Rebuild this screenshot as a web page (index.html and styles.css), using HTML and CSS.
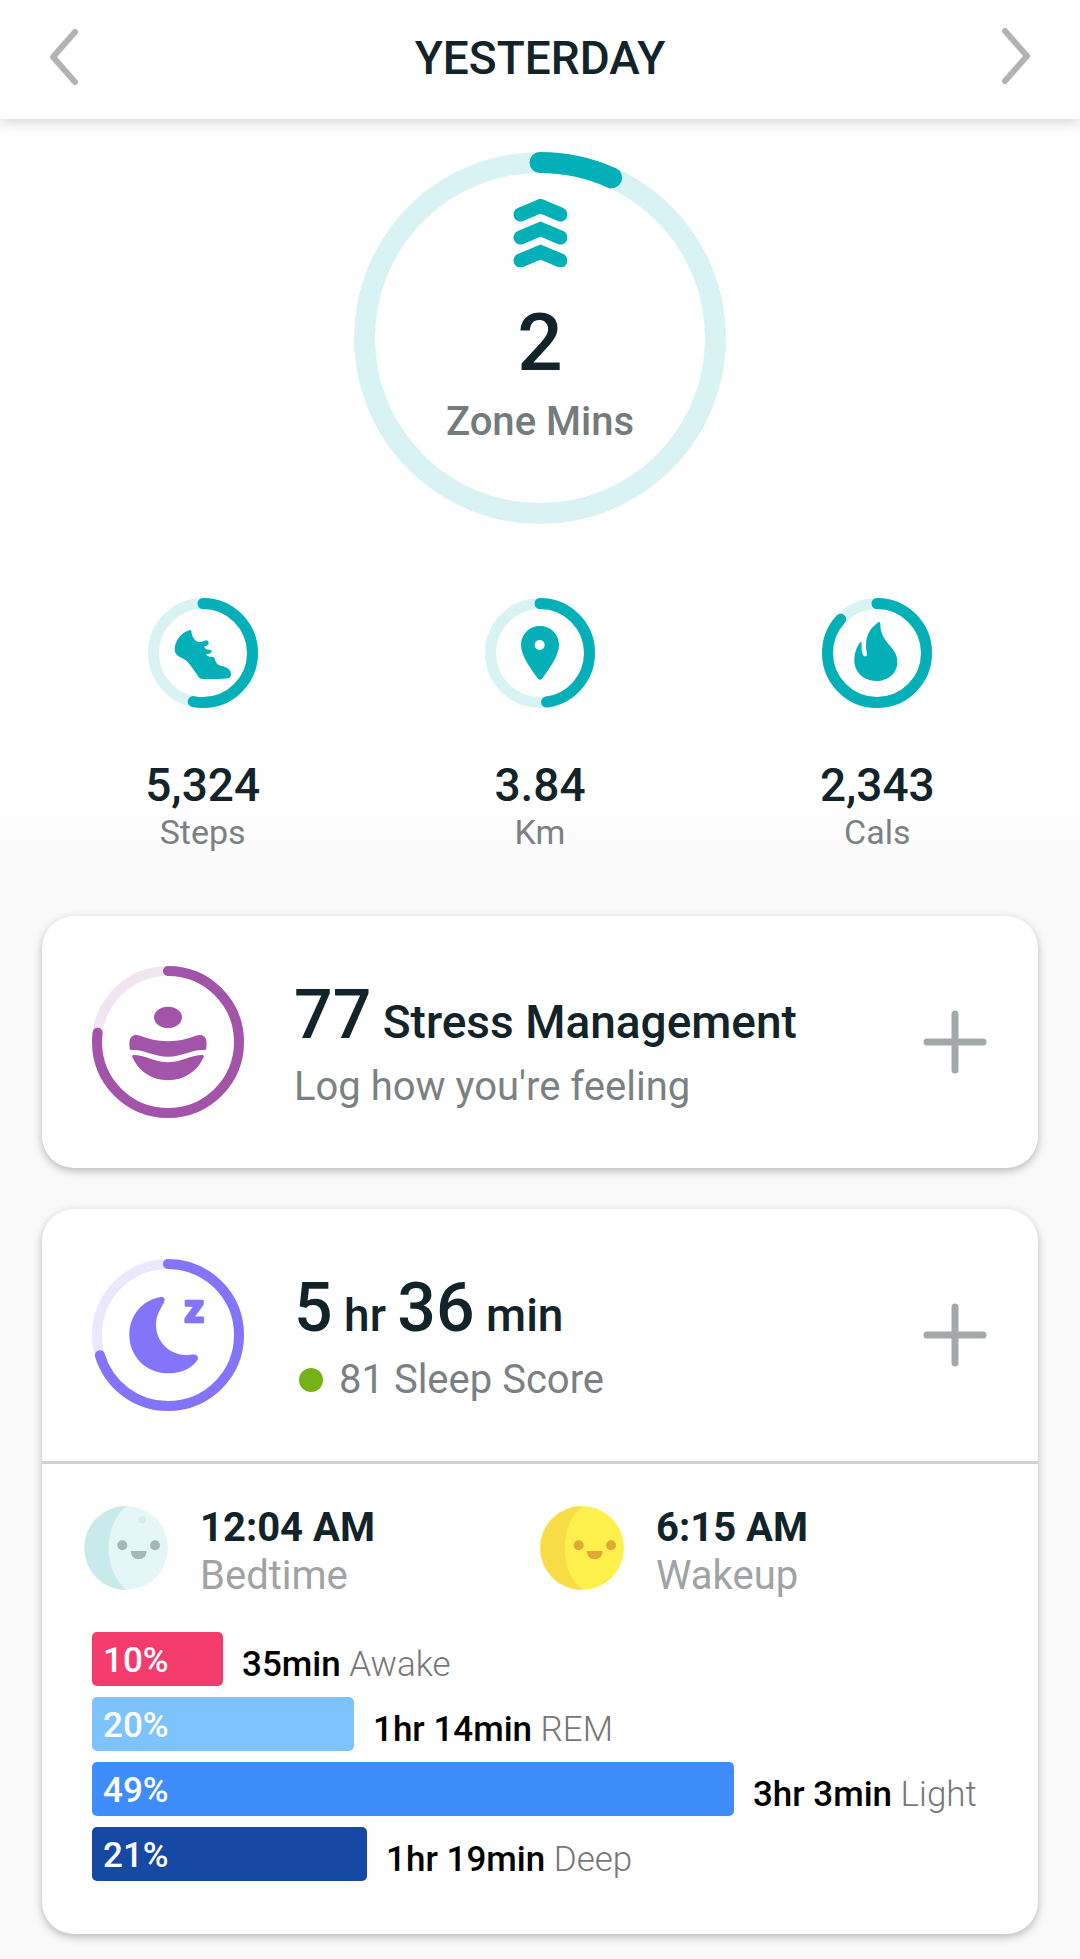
FILE: index.html
```
<!DOCTYPE html>
<html lang="en">
<head>
  <meta charset="utf-8">
  <meta name="viewport" content="width=device-width, initial-scale=1">
  <title>Daily Activity</title>
  <link rel="stylesheet" href="styles.css">
</head>
<body>
  <header class="top-bar">
    <button type="button" class="nav-btn" aria-label="Previous day">
      <svg width="32" height="60" viewBox="0 0 32 60"><path d="M27 5L5 30L27 55"/></svg>
    </button>
    <h1>YESTERDAY</h1>
    <button type="button" class="nav-btn" aria-label="Next day">
      <svg width="32" height="60" viewBox="0 0 32 60"><path d="M5 4L27 29L5 54"/></svg>
    </button>
  </header>

  <main>
    <section class="zone">
      <svg class="zone-ring" viewBox="0 0 372 372">
        <circle class="track" cx="186" cy="186" r="175.5"/>
        <circle class="progress" cx="186" cy="186" r="175.5" pathLength="100" stroke-dasharray="6.7 100" transform="rotate(-90 186 186)"/>
      </svg>
      <div class="zone-info">
        <svg class="zone-icon" width="54" height="68" viewBox="0 0 54 68">
          <path d="M7.5 15.5L27.5 7L47.5 15.5M7.5 38.5L27.5 30L47.5 38.5M7.5 61.5L27.5 53L47.5 61.5"/>
        </svg>
        <div class="zone-value">2</div>
        <div class="zone-label">Zone Mins</div>
      </div>
    </section>

    <section class="stats">
      <div class="stat">
        <svg class="stat-ring" viewBox="0 0 330 330">
          <circle class="track" cx="165" cy="165" r="148.5"/>
          <circle class="progress" cx="165" cy="165" r="148.5" pathLength="100" stroke-dasharray="53.1 100" transform="rotate(-90 165 165)"/>
          <path class="shape" d="M80 152C83 124 101 104 124 97Q129 94 130 100C131 114 139 130 153 132C162 133 167 128 174 127Q182 127 182 136C182 142 175 144 169 145Q170 156 185 155Q192 156 191 161C189 166 181 167 174 169Q177 178 191 176Q201 177 202 187C204 198 212 202 222 204C238 208 248 214 249 228Q249 239 240 241C226 244 190 243 162 243Q156 243 152 237C142 222 128 202 116 189C106 180 94 178 86 170Q79 163 80 152Z"/>
        </svg>
        <div class="stat-value">5,324</div>
        <div class="stat-label">Steps</div>
      </div>
      <div class="stat">
        <svg class="stat-ring" viewBox="0 0 330 330">
          <circle class="track" cx="165" cy="165" r="148.5"/>
          <circle class="progress" cx="165" cy="165" r="148.5" pathLength="100" stroke-dasharray="47.8 100" transform="rotate(-90 165 165)"/>
          <path class="shape" d="M165 84C197 84 222 108 222 141C222 174 192 213 172 241Q165 250 158 241C138 213 108 174 108 141C108 108 133 84 165 84Z"/>
          <circle cx="164" cy="141" r="15" fill="#fff"/>
        </svg>
        <div class="stat-value">3.84</div>
        <div class="stat-label">Km</div>
      </div>
      <div class="stat">
        <svg class="stat-ring" viewBox="0 0 330 330">
          <circle class="track" cx="165" cy="165" r="148.5"/>
          <circle class="progress" cx="165" cy="165" r="148.5" pathLength="100" stroke-dasharray="86.8 100" transform="rotate(-90 165 165)"/>
          <path class="shape" d="M169 73Q175 70 175 78C174 96 182 116 196 134C212 153 226 166 226 192C226 226 198 249 163 249C124 249 97 222 97 187C97 166 104 146 115 133Q119 130 119 136C118 152 120 163 123 171Q126 176 131 175Q136 173 135 167C130 144 131 119 142 101C150 88 160 80 169 73Z"/>
        </svg>
        <div class="stat-value">2,343</div>
        <div class="stat-label">Cals</div>
      </div>
    </section>

    <section class="card">
      <div class="card-head">
        <svg class="card-ring stress" viewBox="0 0 456 456">
          <circle class="track" cx="228" cy="228" r="213"/>
          <circle class="progress" cx="228" cy="228" r="213" pathLength="100" stroke-dasharray="77 100" transform="rotate(-90 228 228)"/>
          <ellipse class="shape" cx="228" cy="154" rx="42" ry="32"/>
          <path class="shape" d="M117 252Q113 252 113 247C112 232 111 221 118 213Q125 204 139 208C166 217 194 226 228 226C262 226 290 217 317 208Q331 204 338 213C345 221 344 232 343 247Q343 252 339 252C300 249 270 272 228 272C186 272 156 249 117 252Z"/>
          <path class="shape" d="M125 267C160 267 190 289 228 289C266 289 296 267 331 267Q338 268 335 274C316 317 276 343 228 343C180 343 140 317 121 274Q118 268 125 267Z"/>
        </svg>
        <div class="card-text">
          <h2><span class="big">77</span> Stress Management</h2>
          <p>Log how you're feeling</p>
        </div>
        <button type="button" class="add-btn" aria-label="Log stress">
          <svg width="64" height="64" viewBox="0 0 64 64"><path d="M32 4V60M4 32H60"/></svg>
        </button>
      </div>
    </section>

    <section class="card">
      <div class="card-head">
        <svg class="card-ring sleep" viewBox="0 0 456 456">
          <circle class="track" cx="228" cy="228" r="213"/>
          <circle class="progress" cx="228" cy="228" r="213" pathLength="100" stroke-dasharray="70.3 100" transform="rotate(-90 228 228)"/>
          <path class="shape" d="M203 115C216 112 221 119 216 130C207 149 192 166 192 198C192 246 230 286 280 288C292 289 301 285 310 287Q321 290 317 302C298 330 266 343 228 343C162 343 112 292 112 228C112 170 150 124 203 115Z"/>
          <text class="zed" x="277" y="188">z</text>
        </svg>
        <div class="card-text">
          <h2><span class="big">5</span> hr <span class="big">36</span> min</h2>
          <p class="score"><span class="dot"></span>81 Sleep Score</p>
        </div>
        <button type="button" class="add-btn" aria-label="Log sleep">
          <svg width="64" height="64" viewBox="0 0 64 64"><path d="M32 4V60M4 32H60"/></svg>
        </button>
      </div>

      <div class="sleep-detail">
        <div class="times">
          <div class="time">
            <svg class="face" viewBox="0 0 252 252">
              <circle cx="126" cy="126" r="126" fill="#e5f6f6"/>
              <path d="M127 0A126 126 0 0 0 127 252Q74 205 74 126Q74 47 127 0Z" fill="#c8eaeb"/>
              <circle cx="175" cy="41" r="11" fill="#d2ebeb"/>
              <g fill="#a3b8b8">
                <circle cx="115" cy="118" r="15"/>
                <circle cx="213" cy="118" r="15"/>
                <path d="M140 135H188Q186 160 164 160Q142 160 140 135Z"/>
              </g>
            </svg>
            <div class="time-text">
              <strong>12:04 AM</strong>
              <span>Bedtime</span>
            </div>
          </div>
          <div class="time">
            <svg class="face" viewBox="0 0 252 252">
              <circle cx="126" cy="126" r="126" fill="#fef04c"/>
              <path d="M127 0A126 126 0 0 0 127 252Q74 205 74 126Q74 47 127 0Z" fill="#f8dd49"/>
              <g fill="#e0a834">
                <circle cx="116" cy="118" r="15"/>
                <circle cx="213" cy="118" r="15"/>
                <path d="M140 135H188Q186 160 164 160Q142 160 140 135Z"/>
              </g>
            </svg>
            <div class="time-text">
              <strong>6:15 AM</strong>
              <span>Wakeup</span>
            </div>
          </div>
        </div>

        <ul class="stages">
          <li>
            <span class="bar awake" style="--share: 10">10%</span>
            <span class="stage-label"><b>35min</b> Awake</span>
          </li>
          <li>
            <span class="bar rem" style="--share: 20">20%</span>
            <span class="stage-label"><b>1hr 14min</b> REM</span>
          </li>
          <li>
            <span class="bar light" style="--share: 49">49%</span>
            <span class="stage-label"><b>3hr 3min</b> Light</span>
          </li>
          <li>
            <span class="bar deep" style="--share: 21">21%</span>
            <span class="stage-label"><b>1hr 19min</b> Deep</span>
          </li>
        </ul>
      </div>
    </section>
  </main>
</body>
</html>
```
FILE: styles.css
```
* {
  box-sizing: border-box;
}
body {
  margin: 0;
  background: linear-gradient(#fff 800px, #f9f9f9 880px);
  font-family: Roboto, "Liberation Sans", sans-serif;
  color: #12232a;
}
h1, h2, p, ul {
  margin: 0;
  padding: 0;
}
svg {
  display: block;
  fill: none;
  stroke-linecap: round;
}
button {
  padding: 0;
  border: none;
  background: none;
  cursor: pointer;
}

/* top bar */
.top-bar {
  display: flex;
  align-items: center;
  justify-content: space-between;
  padding: 27px 48px 32px;
  background: #fff;
  box-shadow: 0 2px 14px rgba(0, 0, 0, 0.2);
}
.top-bar h1 {
  padding-top: 2px;
  font-size: 46px;
  line-height: 54px;
  font-weight: 500;
}
.nav-btn svg {
  stroke: #b3b3b3;
  stroke-width: 6;
  stroke-linejoin: round;
}

/* rings */
.track {
  stroke: #d9f2f3;
}
.progress {
  stroke: #04b0b8;
}
.shape {
  fill: #04b0b8;
}

.zone {
  display: grid;
  justify-content: center;
  padding-top: 33px;
}
.zone-ring, .zone-info {
  grid-area: 1 / 1;
}
.zone-ring {
  width: 372px;
  stroke-width: 21;
}
.zone-info {
  display: flex;
  flex-direction: column;
  align-items: center;
  padding-top: 47px;
}
.zone-icon {
  stroke: #04b0b8;
  stroke-width: 14;
}
.zone-value {
  margin: 36px 0 15px;
  font-size: 80px;
  line-height: 80px;
  font-weight: 500;
}
.zone-label {
  font-size: 40px;
  line-height: 48px;
  font-weight: 500;
  color: #737b7d;
}

.stats {
  display: grid;
  grid-template-columns: repeat(3, 1fr);
  padding: 74px 34px 64px;
  text-align: center;
}
.stat-ring {
  width: 110px;
  margin: 0 auto 50px;
  stroke-width: 33;
}
.stat-ring .shape, .card-ring .shape {
  stroke: none;
}
.stat-ring circle[fill] {
  stroke: none;
}
.stat-value {
  font-size: 46px;
  line-height: 54px;
  font-weight: 500;
}
.stat-label {
  font-size: 34px;
  line-height: 40px;
  color: #7b8183;
}

/* cards */
.card {
  margin: 0 42px 41px;
  border-radius: 32px;
  background: #fff;
  box-shadow: 0 3px 8px rgba(0, 0, 0, 0.26);
}
.card:last-child {
  margin-bottom: 24px;
}
.card-head {
  display: flex;
  align-items: center;
  gap: 50px;
  padding: 50px 51px 50px 50px;
}
.card-ring {
  width: 152px;
  stroke-width: 30;
}
.stress .track {
  stroke: #f1e5f2;
}
.stress .progress {
  stroke: #a254a9;
}
.stress .shape {
  fill: #a254a9;
}
.sleep .track {
  stroke: #ebe8fe;
}
.sleep .progress {
  stroke: #8374fa;
}
.sleep .shape {
  fill: #8374fa;
}
.zed {
  fill: #8374fa;
  stroke: #8374fa;
  stroke-width: 8;
  stroke-linejoin: round;
  font-size: 116px;
  font-weight: 700;
}
.card-text {
  flex: 1;
  padding-top: 4px;
}
.card-text h2 {
  margin-bottom: 17px;
  font-size: 46px;
  line-height: 1;
  font-weight: 500;
}
.big {
  font-size: 68px;
  line-height: 1;
}
.card-text p {
  font-size: 40px;
  line-height: 42px;
  color: #7b8183;
}
.score {
  display: flex;
  align-items: center;
  gap: 16px;
}
.dot {
  width: 24px;
  height: 24px;
  margin-left: 5px;
  border-radius: 50%;
  background: #76b317;
}
.add-btn svg {
  stroke: #a3a9a9;
  stroke-width: 7;
}

.sleep-detail {
  padding: 32px 42px 53px;
  border-top: 3px solid #d0d2d2;
}
.times {
  display: grid;
  grid-template-columns: 1fr 1fr;
  margin-bottom: 32px;
}
.time {
  display: flex;
  align-items: center;
  gap: 32px;
}
.face {
  width: 84px;
}
.time-text {
  display: flex;
  flex-direction: column;
  padding-top: 8px;
  font-size: 40px;
  line-height: 48px;
}
.time-text strong {
  font-weight: 700;
}
.time-text span {
  color: #9fa3a4;
}

.stages {
  display: grid;
  gap: 11px;
  margin: 0 8px;
  list-style: none;
}
.stages li {
  display: flex;
  gap: 19px;
}
.bar {
  flex: none;
  width: calc(var(--share) * 1.462%);
  padding: 4px 11px 0;
  border-radius: 5px;
  font-size: 35px;
  line-height: 50px;
  font-weight: 500;
  color: #fff;
}
.stage-label {
  padding-top: 12px;
  font-size: 35px;
  line-height: 42px;
  font-weight: 300;
  color: #777;
  white-space: nowrap;
}
.stage-label b {
  font-weight: 500;
  color: #000;
}
.awake {
  background: #f33b6c;
}
.rem {
  background: #7ec3fd;
}
.light {
  background: #3f8dfd;
}
.deep {
  background: #1549a3;
}
```
